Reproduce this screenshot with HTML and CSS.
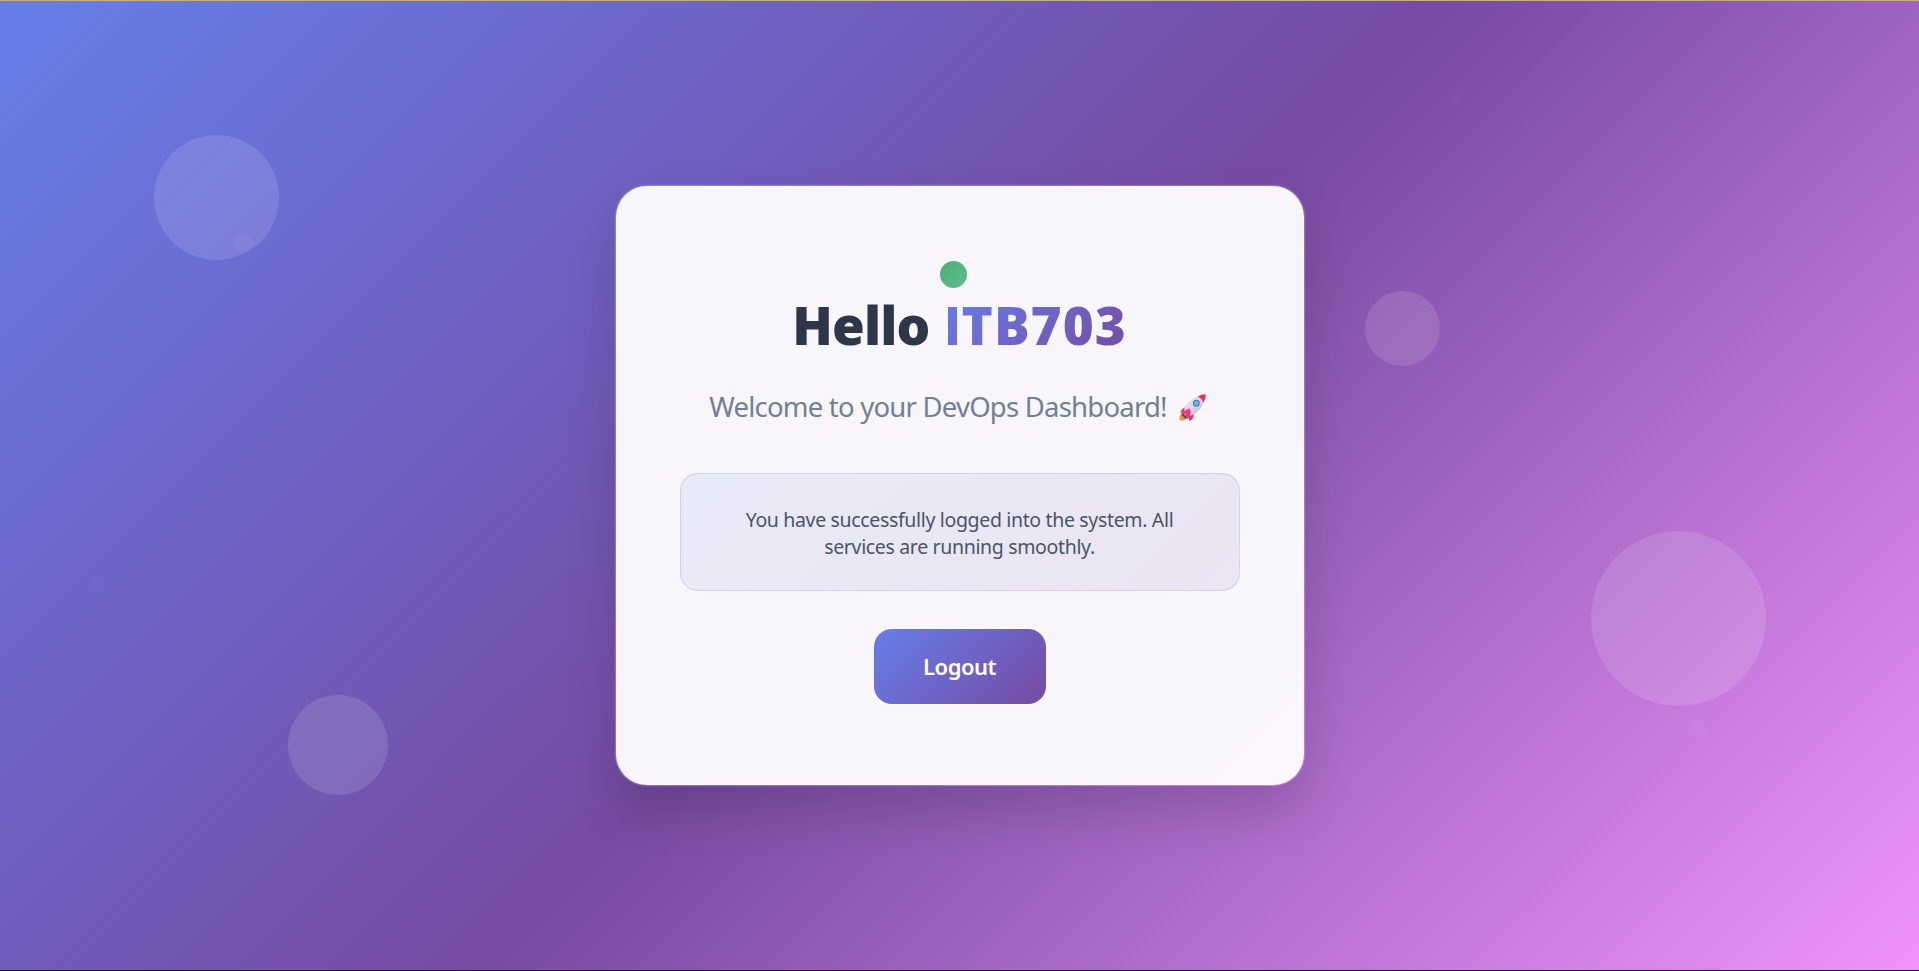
FILE: index.html
```html
<!DOCTYPE html>
<html lang="en">
<head>
<meta charset="utf-8">
<title>DevOps Dashboard</title>
<link rel="stylesheet" href="styles.css">
</head>
<body>
<div class="shape s1"></div><div class="shape s2"></div><div class="shape s3"></div><div class="shape s4"></div>
<div class="shape faint p1"></div><div class="shape faint p2"></div><div class="shape faint p3"></div><div class="shape faint p4"></div>
<main class="card">
  <div class="status"></div>
  <h1 class="title">Hello <span class="name"><span class="plain">I</span>TB703</span></h1>
  <p class="welcome"><span>Welcome to your DevOps Dashboard!</span>
    <svg class="rocket" viewBox="0 0 30 30" role="img" aria-label="Rocket">
      <defs><linearGradient id="hull" x1="0" y1="0" x2="1" y2="1"><stop offset="0" stop-color="#f5eef8"/><stop offset="1" stop-color="#c3b5c9"/></linearGradient><linearGradient id="flame" x1="1" y1="0" x2="0" y2="1"><stop offset="0" stop-color="#ee5b3e"/><stop offset="1" stop-color="#ffac38"/></linearGradient></defs>
      <path d="M5 21C2 22 1 25 1.500 28.500C5 29 8 28 9 25L8 21Z" fill="url(#flame)"/>
      <path d="M10 15C6 14 3.500 17 2.500 20.500L8 20ZM16 21C17 25 15 27.500 12 29L10 23Z" fill="#f0316b"/>
      <path d="M6 21C6 12 13 4 25 2.500C28 2 28 4 27.500 6C25 17 18 23 9 24.500Z" fill="url(#hull)"/>
      <path d="M20.500 4C23 2 26 1 28.500 1.500C29 4 28 7 26 10C25.500 7 23.500 5 20.500 4Z" fill="#ee2f49"/>
      <path d="M4 20L9.500 25.500L8 27L3.500 22Z" fill="#34456e"/>
      <path d="M12 16C8 17 5 19 4 22L8 21.500C8 24 8.500 25.500 10 27C13 24 14 20 12 16Z" fill="#ed3975"/>
      <circle cx="19" cy="10.500" r="3.500" fill="#4a70b8"/><circle cx="19" cy="10.500" r="2.500" fill="#65b5f5"/>
    </svg></p>
  <section class="message"><p>You have successfully logged into the system. All</p><p class="second">services are running smoothly.</p></section>
  <button class="logout"><span>Logout</span></button>
</main>
</body>
</html>
```
FILE: styles.css
```css
* { box-sizing: border-box; margin: 0; padding: 0; }
html, body { height: 971px; overflow: hidden; }
body {
  position: relative;
  display: flex;
  justify-content: center;
  align-items: center;
  border-top: 1px solid #c4ae8c;
  border-bottom: 1px solid #1c1826;
  background: linear-gradient(135deg, #667eea 0%, #764ba2 50%, #f093fb 100%) padding-box;
  font-family: "Noto Sans", "Open Sans", sans-serif;
}
.shape { position: absolute; border-radius: 50%; background: rgba(255,255,255,.12); }
.s1 { left: 154px; top: 134px; width: 125px; height: 125px; }
.s2 { left: 1365px; top: 290px; width: 75px; height: 75px; }
.s3 { left: 1591px; top: 530px; width: 175px; height: 175px; }
.s4 { left: 288px; top: 694px; width: 100px; height: 100px; }
.faint { background: rgba(255,255,255,.03); }
.p1 { left: 233px; top: 232px; width: 20px; height: 20px; }
.p2 { left: 1450px; top: 92px; width: 10px; height: 10px; background: rgba(255,255,255,.02); }
.p3 { left: 1688px; top: 718px; width: 20px; height: 20px; }
.p4 { left: 92px; top: 577px; width: 11px; height: 11px; background: rgba(255,255,255,.01); }
.card {
  position: relative;
  display: flex;
  flex-direction: column;
  align-items: center;
  width: 690px;
  height: 601px;
  padding: 75px 64px 0;
  border: 1px solid rgba(255,255,255,.2);
  border-radius: 32px;
  background: rgba(255,255,255,.95);
  background-clip: padding-box;
  box-shadow: 0 25px 50px rgba(0,0,0,.15), 0 0 0 1px rgba(255,255,255,.05);
}
.status { width: 27px; height: 27px; margin-right: 12px; border-radius: 50%; background: linear-gradient(135deg, #4eac78, #5bc088); }
.title { height: 76px; margin-top: -1px; font-family: "Open Sans", "Noto Sans", sans-serif; font-size: 53px; line-height: 76px; font-weight: 800; letter-spacing: -.800px; color: #2d3748; white-space: nowrap; }
.name { margin-left: 2px; letter-spacing: 1px; background: linear-gradient(135deg, #667eea, #764ba2); -webkit-background-clip: text; background-clip: text; color: transparent; }
.plain { font-family: Roboto, sans-serif; font-weight: 900; }
.welcome { display: flex; align-items: center; gap: 11px; height: 38px; margin: 25px 3px 0 0; font-size: 27.500px; line-height: 38px; letter-spacing: -.780px; color: #718096; white-space: nowrap; }
.rocket { width: 29px; height: 29px; }
.message {
  width: 560px;
  height: 118px;
  margin-top: 47px;
  padding-top: 32px;
  border: 1px solid rgba(102,126,234,.2);
  border-radius: 18px;
  background: linear-gradient(135deg, rgba(102,126,234,.1), rgba(118,75,162,.1));
  color: #4a5568;
  font-size: 19.500px;
  line-height: 27px;
  letter-spacing: -.340px;
  text-align: center;
}
.logout { width: 172px; height: 75px; margin-top: 38px; padding-bottom: 2px; border: 0; border-radius: 18px; background: linear-gradient(135deg, #667eea, #764ba2); color: #fff; font: 600 22px/30px "Noto Sans", sans-serif; letter-spacing: -.500px; }
```
